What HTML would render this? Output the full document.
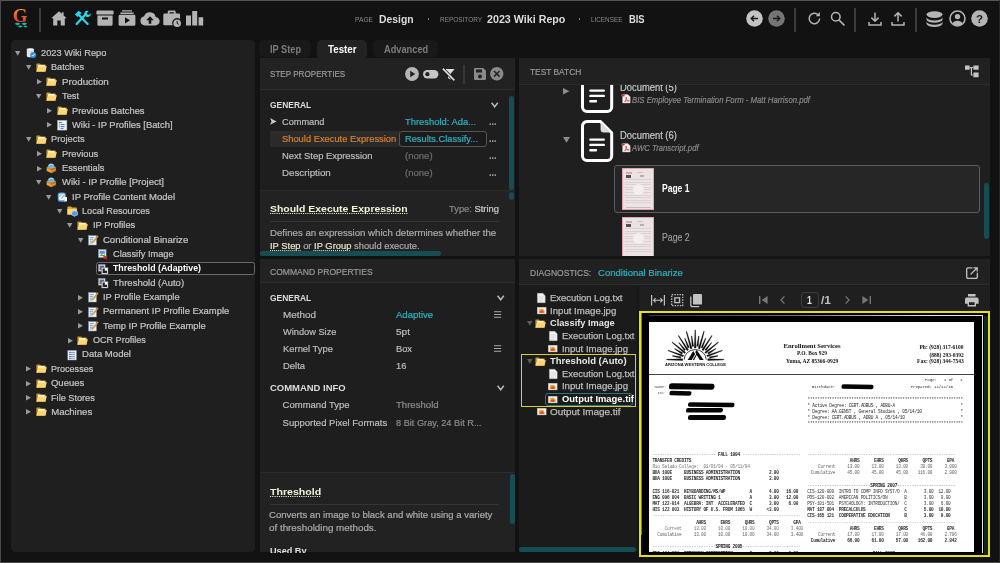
<!DOCTYPE html><html><head><meta charset="utf-8"><title>Design</title><style>
html,body{margin:0;padding:0}
body{width:1000px;height:563px;overflow:hidden;position:relative;background:#121212;font-family:"Liberation Sans",sans-serif;}
.a{position:absolute;box-sizing:border-box}
.t{position:absolute;white-space:pre;display:block}
svg{position:absolute;overflow:visible}
#app{position:absolute;left:0;top:0;width:1000px;height:563px;overflow:hidden;will-change:transform}

</style></head><body><div id="app">
<div class="a" style="left:0px;top:0px;width:1000px;height:563px;background:#121212;"></div>
<svg style="left:12px;top:6px;" width="22" height="26" viewBox="0 0 22 26"><defs><linearGradient id="gg" x1="0" y1="0" x2="0" y2="1"><stop offset="0" stop-color="#f9b21e"/><stop offset="0.55" stop-color="#ee5a24"/><stop offset="1" stop-color="#d9262c"/></linearGradient></defs>
<text x="0.8" y="15.8" font-family="Liberation Serif, serif" font-size="19" font-weight="700" fill="url(#gg)">G</text>
<path d="M2.4 17.8l3.1-1.4 3.1 1.4-3.1 1.4zM9.2 17.8l3.1-1.4 3.1 1.4-3.1 1.4zM5.6 20.4l2.7-1.2 2.7 1.2-2.7 1.2zM11.2 20.4l2.2-1 2.2 1-2.2 1z" fill="#1fb8ae"/></svg>
<div class="a" style="left:38.5px;top:8px;width:2px;height:24px;background:#3c3c3c;"></div>
<svg style="left:51px;top:10.5px;" width="16" height="15" viewBox="0 0 16 15"><path d="M8 0.3 L0.2 7.3 L2.2 7.3 L2.2 14.5 L6.3 14.5 L6.3 9.6 L9.7 9.6 L9.7 14.5 L13.8 14.5 L13.8 7.3 L15.8 7.3 L12.6 4.4 L12.6 1.2 L10.8 1.2 L10.8 2.8 Z" fill="#b4b4b4"/></svg>
<svg style="left:74px;top:10px;" width="16" height="16" viewBox="0 0 16 16"><g fill="none" stroke="#27d6ea" stroke-width="2.2" stroke-linecap="round"><path d="M4.2 4.2 L13.6 14"/><path d="M11.2 4.8 L2.6 14"/></g>
<path d="M0.8 4.6 L4.6 0.8 L7.6 3 L3.6 7 Z" fill="#27d6ea"/><path d="M10.2 3.4 a3.2 3.2 0 0 1 4.6 -2.4 l-2 2 l0.6 1.6 l1.6 0.4 l1.8 -1.8 a3.2 3.2 0 0 1 -4.4 3.6 Z" fill="#27d6ea"/></svg>
<svg style="left:96px;top:10px;" width="18" height="16" viewBox="0 0 18 16"><path d="M1.6 0.4 h14.8 a1.2 1.2 0 0 1 1.2 1.2 v2.2 a0.8 0.8 0 0 1 -0.8 0.8 h-15.6 a0.8 0.8 0 0 1 -0.8 -0.8 v-2.2 a1.2 1.2 0 0 1 1.2 -1.2z M1.4 5.6 h15.2 v8.6 a1.5 1.5 0 0 1 -1.5 1.5 h-12.2 a1.5 1.5 0 0 1 -1.5 -1.5z M6 7.6 v2 h6 v-2z" fill="#b4b4b4" fill-rule="evenodd"/></svg>
<svg style="left:118px;top:10px;" width="18" height="16" viewBox="0 0 18 16"><path d="M4 0.3 h10 v1.3 h-10z M2.4 2.5 h13.2 v1.4 h-13.2z M2 4.8 h14 a1.4 1.4 0 0 1 1.4 1.4 v8.2 a1.4 1.4 0 0 1 -1.4 1.4 h-14 a1.4 1.4 0 0 1 -1.4 -1.4 v-8.2 a1.4 1.4 0 0 1 1.4 -1.4z M7 7.2 v6.2 l5 -3.1z" fill="#b4b4b4" fill-rule="evenodd"/></svg>
<svg style="left:140px;top:11px;" width="20" height="15" viewBox="0 0 20 15"><path d="M5 14.4 a4.6 4.6 0 0 1 -0.9 -9.1 a6 6 0 0 1 11.6 0.7 a4.2 4.2 0 0 1 -0.5 8.4z" fill="#b4b4b4"/><path d="M10 5.2 l-3.8 4 h2.5 v3.6 h2.6 v-3.6 h2.5z" fill="#121212"/></svg>
<svg style="left:163px;top:9.5px;" width="19" height="18" viewBox="0 0 19 18"><path d="M6 0.6 h5.4 a1.3 1.3 0 0 1 1.3 1.3 v1.6 h3 a1.4 1.4 0 0 1 1.4 1.4 v4.2 a5 5 0 0 0 -7.4 6.2 h-8 a1.4 1.4 0 0 1 -1.4 -1.4 v-9 a1.4 1.4 0 0 1 1.4 -1.4 h3 v-1.6 a1.3 1.3 0 0 1 1.3 -1.3z M6.6 2.2 v1.3 h4.2 v-1.3z" fill="#b4b4b4" fill-rule="evenodd"/><circle cx="14.2" cy="13.2" r="3.8" fill="#b4b4b4"/><path d="M14.2 11 v2.4 l1.6 1" stroke="#121212" stroke-width="1" fill="none"/></svg>
<svg style="left:185.8px;top:10.8px;" width="18" height="15" viewBox="0 0 18 15"><path d="M0 4.5 h5 v10 h-5z M6.2 0 h5 v14.5 h-5z M12.6 6.2 h4.6 v8.3 h-4.6z" fill="#b4b4b4"/></svg>
<span class="t" style="top:14.00px;font-size:7.5px;line-height:11px;color:#8a8a8a;left:355.40px;transform:scaleX(0.8868);transform-origin:0 50%;">PAGE</span>
<span class="t" style="top:12.00px;font-size:11.5px;line-height:14px;color:#dcdcdc;left:379.40px;font-weight:700;transform:scaleX(0.9024);transform-origin:0 50%;">Design</span>
<div class="a" style="left:427.5px;top:18px;width:1.6px;height:1.6px;background:#999;border-radius:1px"></div>
<span class="t" style="top:14.00px;font-size:7.5px;line-height:11px;color:#8a8a8a;left:439.80px;transform:scaleX(0.8588);transform-origin:0 50%;">REPOSITORY</span>
<span class="t" style="top:12.00px;font-size:11.5px;line-height:14px;color:#dcdcdc;left:487.20px;font-weight:700;transform:scaleX(0.9304);transform-origin:0 50%;">2023 Wiki Repo</span>
<div class="a" style="left:578.8px;top:18px;width:1.6px;height:1.6px;background:#999;border-radius:1px"></div>
<span class="t" style="top:14.00px;font-size:7.5px;line-height:11px;color:#8a8a8a;left:591.20px;transform:scaleX(0.8461);transform-origin:0 50%;">LICENSEE</span>
<span class="t" style="top:12.00px;font-size:11.5px;line-height:14px;color:#dcdcdc;left:628.60px;font-weight:700;transform:scaleX(0.8137);transform-origin:0 50%;">BIS</span>
<svg style="left:746px;top:10px;" width="17" height="17" viewBox="0 0 17 17"><circle cx="8.5" cy="8.5" r="8.3" fill="#c4c4c4"/><path d="M12 8.5 H5.6 M8 5.8 L5.3 8.5 L8 11.2" stroke="#1a1a1a" stroke-width="1.5" fill="none"/></svg>
<svg style="left:768.2px;top:10px;" width="17" height="17" viewBox="0 0 17 17"><circle cx="8.5" cy="8.5" r="8.3" fill="#757575"/><path d="M5 8.5 H11.4 M9 5.8 L11.7 8.5 L9 11.2" stroke="#1a1a1a" stroke-width="1.5" fill="none"/></svg>
<div class="a" style="left:794.3px;top:8px;width:1.6px;height:24px;background:#3c3c3c;"></div>
<svg style="left:807px;top:11px;" width="15" height="15" viewBox="0 0 15 15"><path d="M12.6 7.6 a5.2 5.2 0 1 1 -1.6 -3.9" stroke="#b4b4b4" stroke-width="1.5" fill="none"/><path d="M12.9 1 v4.2 h-4.2z" fill="#b4b4b4"/></svg>
<svg style="left:830px;top:11px;" width="15" height="15" viewBox="0 0 15 15"><circle cx="5.8" cy="5.8" r="4.3" stroke="#b4b4b4" stroke-width="1.5" fill="none"/><path d="M9 9 L14 14" stroke="#b4b4b4" stroke-width="1.7" stroke-linecap="round"/></svg>
<div class="a" style="left:854.3px;top:8px;width:1.6px;height:24px;background:#3c3c3c;"></div>
<svg style="left:868px;top:11.5px;" width="14" height="14" viewBox="0 0 14 14"><path d="M7 0.5 v8.5 M3.4 5.6 L7 9.2 L10.6 5.6 M1 10 v3 h12 v-3" stroke="#b4b4b4" stroke-width="1.5" fill="none"/></svg>
<svg style="left:890.7px;top:11.5px;" width="14" height="14" viewBox="0 0 14 14"><path d="M7 9.5 v-8.5 M3.4 4.4 L7 0.8 L10.6 4.4 M1 10 v3 h12 v-3" stroke="#b4b4b4" stroke-width="1.5" fill="none"/></svg>
<div class="a" style="left:915px;top:8px;width:1.6px;height:24px;background:#3c3c3c;"></div>
<svg style="left:926px;top:10.5px;" width="17" height="16" viewBox="0 0 17 16"><ellipse cx="8.5" cy="3.6" rx="8" ry="3.4" fill="#b4b4b4"/><path d="M0.5 6.2 a8 3.4 0 0 0 16 0 v2.2 a8 3.4 0 0 1 -16 0z M0.5 10.4 a8 3.4 0 0 0 16 0 v2.2 a8 3.4 0 0 1 -16 0z" fill="#b4b4b4"/></svg>
<svg style="left:949px;top:10.2px;" width="17" height="17" viewBox="0 0 17 17"><circle cx="8.5" cy="8.5" r="7.5" stroke="#b4b4b4" stroke-width="1.6" fill="none"/><circle cx="8.5" cy="6.6" r="2.7" fill="#b4b4b4"/><path d="M3.4 13.4 a5.4 4 0 0 1 10.2 0 a7 7 0 0 1 -10.2 0z" fill="#b4b4b4"/></svg>
<svg style="left:971.3px;top:10.2px;" width="17" height="17" viewBox="0 0 17 17"><circle cx="8.5" cy="8.5" r="8.3" fill="#b4b4b4"/><text x="8.5" y="12.6" text-anchor="middle" font-size="11.5" font-weight="700" font-family="Liberation Sans, sans-serif" fill="#1a1a1a">?</text></svg>
<div class="a" style="left:10.5px;top:39.8px;width:244.8px;height:512.5px;background:#1f1f1f;border-radius:4.5px"></div>
<svg style="left:15.399999999999999px;top:51.1px;" width="5.4" height="4.8" viewBox="0 0 5.4 4.8"><path d="M0 0 h5.4 l-2.7 4.8z" fill="#9a9a9a"/></svg>
<svg style="left:25.499999999999996px;top:48.3px;" width="11" height="10.5" viewBox="0 0 11 10.5"><path d="M0.8 1.8 a3.6 1.5 0 0 1 7.2 0 v6 a3.6 1.5 0 0 1 -7.2 0z" fill="#e3e6ea"/><ellipse cx="4.4" cy="1.8" rx="3.6" ry="1.4" fill="#f7f8fa" stroke="#aab" stroke-width="0.4"/><circle cx="7.2" cy="7" r="3" fill="#2f8fe0"/><path d="M5.8 7 l1 1.1 l1.9 -2.2" stroke="#fff" stroke-width="0.9" fill="none"/></svg>
<span class="t" style="top:46.00px;font-size:9.6px;line-height:13px;color:#c4c4c4;left:40.80px;transform:scaleX(0.9655);transform-origin:0 50%;-webkit-text-stroke:0.22px #c4c4c4;">2023 Wiki Repo</span>
<svg style="left:25.75px;top:65.44999999999999px;" width="5.4" height="4.8" viewBox="0 0 5.4 4.8"><path d="M0 0 h5.4 l-2.7 4.8z" fill="#9a9a9a"/></svg>
<svg style="left:35.849999999999994px;top:63.04999999999999px;" width="11" height="9.2" viewBox="0 0 11 9.2"><path d="M0.4 1 a0.6 0.6 0 0 1 0.6 -0.6 h3 l1 1.1 h4.2 a0.6 0.6 0 0 1 0.6 0.6 v6.4 h-9.4z" fill="#c8962a"/><path d="M2.4 3.6 h8.4 l-1.5 5.2 h-8.6z" fill="#ffd56e"/><path d="M2 2 h6.6 v1.6 h-6.6z" fill="#fff6d6"/><path d="M0.7 8.8 l1.7 -5.2 h8.4" fill="none" stroke="#fff3c4" stroke-width="0.5"/></svg>
<span class="t" style="top:60.00px;font-size:9.6px;line-height:13px;color:#c4c4c4;left:51.15px;transform:scaleX(0.9518);transform-origin:0 50%;-webkit-text-stroke:0.22px #c4c4c4;">Batches</span>
<svg style="left:36.7px;top:79.4px;" width="5" height="5.4" viewBox="0 0 5 5.4"><path d="M0 0 v5.4 l5 -2.7z" fill="#9a9a9a"/></svg>
<svg style="left:46.2px;top:77.4px;" width="11" height="9.2" viewBox="0 0 11 9.2"><path d="M0.4 1 a0.6 0.6 0 0 1 0.6 -0.6 h3 l1 1.1 h4.2 a0.6 0.6 0 0 1 0.6 0.6 v6.4 h-9.4z" fill="#c8962a"/><path d="M2.4 3.6 h8.4 l-1.5 5.2 h-8.6z" fill="#ffd56e"/><path d="M2 2 h6.6 v1.6 h-6.6z" fill="#fff6d6"/><path d="M0.7 8.8 l1.7 -5.2 h8.4" fill="none" stroke="#fff3c4" stroke-width="0.5"/></svg>
<span class="t" style="top:75.00px;font-size:9.6px;line-height:13px;color:#c4c4c4;left:61.50px;transform:scaleX(1.0202);transform-origin:0 50%;-webkit-text-stroke:0.22px #c4c4c4;">Production</span>
<svg style="left:36.1px;top:94.14999999999999px;" width="5.4" height="4.8" viewBox="0 0 5.4 4.8"><path d="M0 0 h5.4 l-2.7 4.8z" fill="#9a9a9a"/></svg>
<svg style="left:46.2px;top:91.75px;" width="11" height="9.2" viewBox="0 0 11 9.2"><path d="M0.4 1 a0.6 0.6 0 0 1 0.6 -0.6 h3 l1 1.1 h4.2 a0.6 0.6 0 0 1 0.6 0.6 v6.4 h-9.4z" fill="#c8962a"/><path d="M2.4 3.6 h8.4 l-1.5 5.2 h-8.6z" fill="#ffd56e"/><path d="M2 2 h6.6 v1.6 h-6.6z" fill="#fff6d6"/><path d="M0.7 8.8 l1.7 -5.2 h8.4" fill="none" stroke="#fff3c4" stroke-width="0.5"/></svg>
<span class="t" style="top:89.00px;font-size:9.6px;line-height:13px;color:#c4c4c4;left:61.50px;transform:scaleX(0.9700);transform-origin:0 50%;-webkit-text-stroke:0.22px #c4c4c4;">Test</span>
<svg style="left:47.05px;top:108.10000000000001px;" width="5" height="5.4" viewBox="0 0 5 5.4"><path d="M0 0 v5.4 l5 -2.7z" fill="#9a9a9a"/></svg>
<svg style="left:56.55px;top:106.10000000000001px;" width="11" height="9.2" viewBox="0 0 11 9.2"><path d="M0.4 1 a0.6 0.6 0 0 1 0.6 -0.6 h3 l1 1.1 h4.2 a0.6 0.6 0 0 1 0.6 0.6 v6.4 h-9.4z" fill="#c8962a"/><path d="M2.4 3.6 h8.4 l-1.5 5.2 h-8.6z" fill="#ffd56e"/><path d="M2 2 h6.6 v1.6 h-6.6z" fill="#fff6d6"/><path d="M0.7 8.8 l1.7 -5.2 h8.4" fill="none" stroke="#fff3c4" stroke-width="0.5"/></svg>
<span class="t" style="top:104.00px;font-size:9.6px;line-height:13px;color:#c4c4c4;left:71.85px;transform:scaleX(0.9711);transform-origin:0 50%;-webkit-text-stroke:0.22px #c4c4c4;">Previous Batches</span>
<svg style="left:47.05px;top:122.45px;" width="5" height="5.4" viewBox="0 0 5 5.4"><path d="M0 0 v5.4 l5 -2.7z" fill="#9a9a9a"/></svg>
<svg style="left:56.55px;top:120.05px;" width="10.5" height="10.5" viewBox="0 0 10.5 10.5"><rect x="0.5" y="0.3" width="9.4" height="9.8" fill="#f2f4f7" stroke="#9aa3ad" stroke-width="0.5"/><path d="M2 2.4 h3 M3.6 4.6 h4 M3.6 6.6 h4 M3.6 8.4 h3" stroke="#3b7fc4" stroke-width="1"/><path d="M2.4 2.4 v6" stroke="#777" stroke-width="0.5"/></svg>
<span class="t" style="top:118.00px;font-size:9.6px;line-height:13px;color:#c4c4c4;left:71.85px;transform:scaleX(0.9784);transform-origin:0 50%;-webkit-text-stroke:0.22px #c4c4c4;">Wiki - IP Profiles [Batch]</span>
<svg style="left:25.75px;top:137.2px;" width="5.4" height="4.8" viewBox="0 0 5.4 4.8"><path d="M0 0 h5.4 l-2.7 4.8z" fill="#9a9a9a"/></svg>
<svg style="left:35.849999999999994px;top:134.8px;" width="11" height="9.2" viewBox="0 0 11 9.2"><path d="M0.4 1 a0.6 0.6 0 0 1 0.6 -0.6 h3 l1 1.1 h4.2 a0.6 0.6 0 0 1 0.6 0.6 v6.4 h-9.4z" fill="#c8962a"/><path d="M2.4 3.6 h8.4 l-1.5 5.2 h-8.6z" fill="#ffd56e"/><path d="M2 2 h6.6 v1.6 h-6.6z" fill="#fff6d6"/><path d="M0.7 8.8 l1.7 -5.2 h8.4" fill="none" stroke="#fff3c4" stroke-width="0.5"/></svg>
<span class="t" style="top:132.00px;font-size:9.6px;line-height:13px;color:#c4c4c4;left:51.15px;transform:scaleX(0.9700);transform-origin:0 50%;-webkit-text-stroke:0.22px #c4c4c4;">Projects</span>
<svg style="left:36.7px;top:151.14999999999998px;" width="5" height="5.4" viewBox="0 0 5 5.4"><path d="M0 0 v5.4 l5 -2.7z" fill="#9a9a9a"/></svg>
<svg style="left:46.2px;top:149.15px;" width="11" height="9.2" viewBox="0 0 11 9.2"><path d="M0.4 1 a0.6 0.6 0 0 1 0.6 -0.6 h3 l1 1.1 h4.2 a0.6 0.6 0 0 1 0.6 0.6 v6.4 h-9.4z" fill="#c8962a"/><path d="M2.4 3.6 h8.4 l-1.5 5.2 h-8.6z" fill="#ffd56e"/><path d="M2 2 h6.6 v1.6 h-6.6z" fill="#fff6d6"/><path d="M0.7 8.8 l1.7 -5.2 h8.4" fill="none" stroke="#fff3c4" stroke-width="0.5"/></svg>
<span class="t" style="top:147.00px;font-size:9.6px;line-height:13px;color:#c4c4c4;left:61.50px;transform:scaleX(0.9700);transform-origin:0 50%;-webkit-text-stroke:0.22px #c4c4c4;">Previous</span>
<svg style="left:36.7px;top:165.5px;" width="5" height="5.4" viewBox="0 0 5 5.4"><path d="M0 0 v5.4 l5 -2.7z" fill="#9a9a9a"/></svg>
<svg style="left:46.2px;top:163.10000000000002px;" width="10.5" height="10.5" viewBox="0 0 10.5 10.5"><path d="M0.6 4 l4.6 1.6 l4.6 -1.6 v4 l-4.6 2.2 l-4.6 -2.2z" fill="#d9902c"/><path d="M5.2 5.6 l4.6 -1.6 v4 l-4.6 2.2z" fill="#b87218"/><path d="M0.6 4 l4.6 -1.4 l4.6 1.4 l-4.6 1.6z" fill="#f6c870"/><path d="M2 3.8 a3.2 3.2 0 0 1 6.4 0 l-3.2 1.2z" fill="#5fb0ee"/><path d="M3 2.6 a2.4 2 0 0 1 4.4 0" stroke="#e6f3fc" stroke-width="0.7" fill="none"/><path d="M1 6.6 l4.2 1.8 l4.2 -1.8" stroke="#f3d9a0" stroke-width="0.5" fill="none"/></svg>
<span class="t" style="top:161.00px;font-size:9.6px;line-height:13px;color:#c4c4c4;left:61.50px;transform:scaleX(0.9700);transform-origin:0 50%;-webkit-text-stroke:0.22px #c4c4c4;">Essentials</span>
<svg style="left:36.1px;top:180.25px;" width="5.4" height="4.8" viewBox="0 0 5.4 4.8"><path d="M0 0 h5.4 l-2.7 4.8z" fill="#9a9a9a"/></svg>
<svg style="left:46.2px;top:177.45000000000002px;" width="10.5" height="10.5" viewBox="0 0 10.5 10.5"><path d="M0.6 4 l4.6 1.6 l4.6 -1.6 v4 l-4.6 2.2 l-4.6 -2.2z" fill="#d9902c"/><path d="M5.2 5.6 l4.6 -1.6 v4 l-4.6 2.2z" fill="#b87218"/><path d="M0.6 4 l4.6 -1.4 l4.6 1.4 l-4.6 1.6z" fill="#f6c870"/><path d="M2 3.8 a3.2 3.2 0 0 1 6.4 0 l-3.2 1.2z" fill="#5fb0ee"/><path d="M3 2.6 a2.4 2 0 0 1 4.4 0" stroke="#e6f3fc" stroke-width="0.7" fill="none"/><path d="M1 6.6 l4.2 1.8 l4.2 -1.8" stroke="#f3d9a0" stroke-width="0.5" fill="none"/></svg>
<span class="t" style="top:175.00px;font-size:9.6px;line-height:13px;color:#c4c4c4;left:61.50px;transform:scaleX(0.9869);transform-origin:0 50%;-webkit-text-stroke:0.22px #c4c4c4;">Wiki - IP Profile [Project]</span>
<svg style="left:46.449999999999996px;top:194.6px;" width="5.4" height="4.8" viewBox="0 0 5.4 4.8"><path d="M0 0 h5.4 l-2.7 4.8z" fill="#9a9a9a"/></svg>
<svg style="left:56.55px;top:191.8px;" width="10.5" height="10.5" viewBox="0 0 10.5 10.5"><rect x="0.8" y="0.6" width="8" height="9.2" rx="2" fill="#4aa0e6"/><rect x="1.8" y="1.8" width="6" height="6.4" rx="1.4" fill="#eef4fa"/><path d="M4.6 6.4 l2.6 -3.4" stroke="#e05030" stroke-width="0.9"/><path d="M2.6 4.6 a2.4 2.4 0 0 1 2 -2" stroke="#6ab04a" stroke-width="0.9" fill="none"/><path d="M7.4 5 h2.6 v3.4 a1.2 1.2 0 0 1 -1.2 1.2 h-1.4z" fill="#f4f6f8"/></svg>
<span class="t" style="top:190.00px;font-size:9.6px;line-height:13px;color:#c4c4c4;left:71.85px;transform:scaleX(0.9922);transform-origin:0 50%;-webkit-text-stroke:0.22px #c4c4c4;">IP Profile Content Model</span>
<svg style="left:56.79999999999999px;top:208.95px;" width="5.4" height="4.8" viewBox="0 0 5.4 4.8"><path d="M0 0 h5.4 l-2.7 4.8z" fill="#9a9a9a"/></svg>
<svg style="left:66.89999999999999px;top:206.15px;" width="11" height="10.5" viewBox="0 0 11 10.5"><path d="M0.4 1 a0.6 0.6 0 0 1 0.6 -0.6 h3 l1 1.1 h4.2 a0.6 0.6 0 0 1 0.6 0.6 v6.4 h-9.4z" fill="#d9a83a"/><path d="M0.4 3 h9.4 v5.6 h-9.4z" fill="#ffd56e"/><path d="M7.6 4.6 l3 1.3 v3 l-3 1.4 l-3 -1.4 v-3z" fill="#49a0e8" stroke="#e8f2fb" stroke-width="0.5"/></svg>
<span class="t" style="top:204.00px;font-size:9.6px;line-height:13px;color:#c4c4c4;left:82.20px;transform:scaleX(0.9501);transform-origin:0 50%;-webkit-text-stroke:0.22px #c4c4c4;">Local Resources</span>
<svg style="left:67.15px;top:223.29999999999998px;" width="5.4" height="4.8" viewBox="0 0 5.4 4.8"><path d="M0 0 h5.4 l-2.7 4.8z" fill="#9a9a9a"/></svg>
<svg style="left:77.25px;top:220.9px;" width="11" height="9.2" viewBox="0 0 11 9.2"><path d="M0.4 1 a0.6 0.6 0 0 1 0.6 -0.6 h3 l1 1.1 h4.2 a0.6 0.6 0 0 1 0.6 0.6 v6.4 h-9.4z" fill="#c8962a"/><path d="M2.4 3.6 h8.4 l-1.5 5.2 h-8.6z" fill="#ffd56e"/><path d="M2 2 h6.6 v1.6 h-6.6z" fill="#fff6d6"/><path d="M0.7 8.8 l1.7 -5.2 h8.4" fill="none" stroke="#fff3c4" stroke-width="0.5"/></svg>
<span class="t" style="top:218.00px;font-size:9.6px;line-height:13px;color:#c4c4c4;left:92.55px;transform:scaleX(0.9700);transform-origin:0 50%;-webkit-text-stroke:0.22px #c4c4c4;">IP Profiles</span>
<svg style="left:77.5px;top:237.64999999999998px;" width="5.4" height="4.8" viewBox="0 0 5.4 4.8"><path d="M0 0 h5.4 l-2.7 4.8z" fill="#9a9a9a"/></svg>
<svg style="left:87.6px;top:234.85px;" width="10.5" height="10.5" viewBox="0 0 10.5 10.5"><rect x="0.6" y="0.6" width="7.8" height="9.4" fill="#eef1f5" stroke="#8b97a5" stroke-width="0.5"/><path d="M1.8 2.6 h4 M1.8 4.4 h3 M1.8 6.2 h2.4 M1.8 8 h2" stroke="#4b8fd0" stroke-width="0.8"/><path d="M9.6 0.6 l0.9 0.9 l-5 6 l-1.6 0.7 l0.6 -1.7z" fill="#f0a030" stroke="#a05a10" stroke-width="0.3"/></svg>
<span class="t" style="top:233.00px;font-size:9.6px;line-height:13px;color:#c4c4c4;left:102.90px;-webkit-text-stroke:0.22px #c4c4c4;">Conditional Binarize</span>
<svg style="left:97.95px;top:249.20000000000002px;" width="10.5" height="10.5" viewBox="0 0 10.5 10.5"><rect x="0.5" y="0.5" width="7.6" height="8" fill="#e6ebf2" stroke="#8b97a5" stroke-width="0.5"/><rect x="1.6" y="1.8" width="5.2" height="3" fill="#5a95d6"/><path d="M1.6 7 l2 -2.2 l1.6 1.4 l1.6 -1 v1.8z" fill="#6aa84a"/><path d="M5 6 l4.8 2 l-2 0.6 l1.6 1.6 l-0.8 0.5 l-1.6 -1.7 l-1 1.5z" fill="#e0362a"/></svg>
<span class="t" style="top:247.00px;font-size:9.6px;line-height:13px;color:#c4c4c4;left:113.25px;transform:scaleX(0.9631);transform-origin:0 50%;-webkit-text-stroke:0.22px #c4c4c4;">Classify Image</span>
<div class="a" style="left:95.6px;top:261.75px;width:159.4px;height:12.8px;background:#191919;border:1px solid #6a6a6a;border-radius:2.5px"></div>
<svg style="left:97.95px;top:263.55px;" width="10.5" height="10.5" viewBox="0 0 10.5 10.5"><rect x="0.5" y="0.5" width="6.6" height="6.6" fill="#dfe5ec" stroke="#8b97a5" stroke-width="0.5"/><rect x="1.6" y="1.6" width="4.4" height="4.4" fill="#5e6e7e"/><rect x="3.6" y="3.6" width="6.4" height="6.4" fill="#f4f6f8" stroke="#6b7785" stroke-width="0.5"/><path d="M4.6 4.6 h2.2 v2.2 h2.2 v2.2 h-4.4z" fill="#222"/></svg>
<span class="t" style="top:261.00px;font-size:9.6px;line-height:13px;color:#ffffff;left:113.25px;font-weight:700;transform:scaleX(0.9171);transform-origin:0 50%;">Threshold (Adaptive)</span>
<svg style="left:97.95px;top:277.90000000000003px;" width="10.5" height="10.5" viewBox="0 0 10.5 10.5"><rect x="0.5" y="0.5" width="6.6" height="6.6" fill="#dfe5ec" stroke="#8b97a5" stroke-width="0.5"/><rect x="1.6" y="1.6" width="4.4" height="4.4" fill="#5e6e7e"/><rect x="3.6" y="3.6" width="6.4" height="6.4" fill="#f4f6f8" stroke="#6b7785" stroke-width="0.5"/><path d="M4.6 4.6 h2.2 v2.2 h2.2 v2.2 h-4.4z" fill="#222"/></svg>
<span class="t" style="top:276.00px;font-size:9.6px;line-height:13px;color:#c4c4c4;left:113.25px;transform:scaleX(0.9951);transform-origin:0 50%;-webkit-text-stroke:0.22px #c4c4c4;">Threshold (Auto)</span>
<svg style="left:78.1px;top:294.65px;" width="5" height="5.4" viewBox="0 0 5 5.4"><path d="M0 0 v5.4 l5 -2.7z" fill="#9a9a9a"/></svg>
<svg style="left:87.6px;top:292.25px;" width="10.5" height="10.5" viewBox="0 0 10.5 10.5"><rect x="0.6" y="0.6" width="7.8" height="9.4" fill="#eef1f5" stroke="#8b97a5" stroke-width="0.5"/><path d="M1.8 2.6 h4 M1.8 4.4 h3 M1.8 6.2 h2.4 M1.8 8 h2" stroke="#4b8fd0" stroke-width="0.8"/><path d="M9.6 0.6 l0.9 0.9 l-5 6 l-1.6 0.7 l0.6 -1.7z" fill="#f0a030" stroke="#a05a10" stroke-width="0.3"/></svg>
<span class="t" style="top:290.00px;font-size:9.6px;line-height:13px;color:#c4c4c4;left:102.90px;transform:scaleX(0.9727);transform-origin:0 50%;-webkit-text-stroke:0.22px #c4c4c4;">IP Profile Example</span>
<svg style="left:78.1px;top:309.0px;" width="5" height="5.4" viewBox="0 0 5 5.4"><path d="M0 0 v5.4 l5 -2.7z" fill="#9a9a9a"/></svg>
<svg style="left:87.6px;top:306.6px;" width="10.5" height="10.5" viewBox="0 0 10.5 10.5"><rect x="0.6" y="0.6" width="7.8" height="9.4" fill="#eef1f5" stroke="#8b97a5" stroke-width="0.5"/><path d="M1.8 2.6 h4 M1.8 4.4 h3 M1.8 6.2 h2.4 M1.8 8 h2" stroke="#4b8fd0" stroke-width="0.8"/><path d="M9.6 0.6 l0.9 0.9 l-5 6 l-1.6 0.7 l0.6 -1.7z" fill="#f0a030" stroke="#a05a10" stroke-width="0.3"/></svg>
<span class="t" style="top:304.00px;font-size:9.6px;line-height:13px;color:#c4c4c4;left:102.90px;transform:scaleX(0.9841);transform-origin:0 50%;-webkit-text-stroke:0.22px #c4c4c4;">Permanent IP Profile Example</span>
<svg style="left:78.1px;top:323.34999999999997px;" width="5" height="5.4" viewBox="0 0 5 5.4"><path d="M0 0 v5.4 l5 -2.7z" fill="#9a9a9a"/></svg>
<svg style="left:87.6px;top:320.95px;" width="10.5" height="10.5" viewBox="0 0 10.5 10.5"><rect x="0.6" y="0.6" width="7.8" height="9.4" fill="#eef1f5" stroke="#8b97a5" stroke-width="0.5"/><path d="M1.8 2.6 h4 M1.8 4.4 h3 M1.8 6.2 h2.4 M1.8 8 h2" stroke="#4b8fd0" stroke-width="0.8"/><path d="M9.6 0.6 l0.9 0.9 l-5 6 l-1.6 0.7 l0.6 -1.7z" fill="#f0a030" stroke="#a05a10" stroke-width="0.3"/></svg>
<span class="t" style="top:319.00px;font-size:9.6px;line-height:13px;color:#c4c4c4;left:102.90px;transform:scaleX(0.9802);transform-origin:0 50%;-webkit-text-stroke:0.22px #c4c4c4;">Temp IP Profile Example</span>
<svg style="left:67.75px;top:337.7px;" width="5" height="5.4" viewBox="0 0 5 5.4"><path d="M0 0 v5.4 l5 -2.7z" fill="#9a9a9a"/></svg>
<svg style="left:77.25px;top:335.7px;" width="11" height="9.2" viewBox="0 0 11 9.2"><path d="M0.4 1 a0.6 0.6 0 0 1 0.6 -0.6 h3 l1 1.1 h4.2 a0.6 0.6 0 0 1 0.6 0.6 v6.4 h-9.4z" fill="#c8962a"/><path d="M2.4 3.6 h8.4 l-1.5 5.2 h-8.6z" fill="#ffd56e"/><path d="M2 2 h6.6 v1.6 h-6.6z" fill="#fff6d6"/><path d="M0.7 8.8 l1.7 -5.2 h8.4" fill="none" stroke="#fff3c4" stroke-width="0.5"/></svg>
<span class="t" style="top:333.00px;font-size:9.6px;line-height:13px;color:#c4c4c4;left:92.55px;transform:scaleX(0.9431);transform-origin:0 50%;-webkit-text-stroke:0.22px #c4c4c4;">OCR Profiles</span>
<svg style="left:66.89999999999999px;top:349.65px;" width="10.5" height="10.5" viewBox="0 0 10.5 10.5"><rect x="0.8" y="0.4" width="8.6" height="9.6" fill="#eef1f5" stroke="#8b97a5" stroke-width="0.5"/><path d="M2.2 2.4 h5.8 M2.2 4.4 h5.8 M2.2 6.4 h5.8 M2.2 8.2 h5.8" stroke="#7d8fa6" stroke-width="0.9"/><path d="M2.2 2.4 h1.6 M2.2 4.4 h1.6 M2.2 6.4 h1.6 M2.2 8.2 h1.6" stroke="#3b7fc4" stroke-width="0.9"/></svg>
<span class="t" style="top:347.00px;font-size:9.6px;line-height:13px;color:#c4c4c4;left:82.20px;transform:scaleX(0.9967);transform-origin:0 50%;-webkit-text-stroke:0.22px #c4c4c4;">Data Model</span>
<svg style="left:26.349999999999998px;top:366.4px;" width="5" height="5.4" viewBox="0 0 5 5.4"><path d="M0 0 v5.4 l5 -2.7z" fill="#9a9a9a"/></svg>
<svg style="left:35.849999999999994px;top:364.4px;" width="11" height="9.2" viewBox="0 0 11 9.2"><path d="M0.4 1 a0.6 0.6 0 0 1 0.6 -0.6 h3 l1 1.1 h4.2 a0.6 0.6 0 0 1 0.6 0.6 v6.4 h-9.4z" fill="#c8962a"/><path d="M2.4 3.6 h8.4 l-1.5 5.2 h-8.6z" fill="#ffd56e"/><path d="M2 2 h6.6 v1.6 h-6.6z" fill="#fff6d6"/><path d="M0.7 8.8 l1.7 -5.2 h8.4" fill="none" stroke="#fff3c4" stroke-width="0.5"/></svg>
<span class="t" style="top:362.00px;font-size:9.6px;line-height:13px;color:#c4c4c4;left:51.15px;transform:scaleX(0.9420);transform-origin:0 50%;-webkit-text-stroke:0.22px #c4c4c4;">Processes</span>
<svg style="left:26.349999999999998px;top:380.75px;" width="5" height="5.4" viewBox="0 0 5 5.4"><path d="M0 0 v5.4 l5 -2.7z" fill="#9a9a9a"/></svg>
<svg style="left:35.849999999999994px;top:378.75px;" width="11" height="9.2" viewBox="0 0 11 9.2"><path d="M0.4 1 a0.6 0.6 0 0 1 0.6 -0.6 h3 l1 1.1 h4.2 a0.6 0.6 0 0 1 0.6 0.6 v6.4 h-9.4z" fill="#c8962a"/><path d="M2.4 3.6 h8.4 l-1.5 5.2 h-8.6z" fill="#ffd56e"/><path d="M2 2 h6.6 v1.6 h-6.6z" fill="#fff6d6"/><path d="M0.7 8.8 l1.7 -5.2 h8.4" fill="none" stroke="#fff3c4" stroke-width="0.5"/></svg>
<span class="t" style="top:376.00px;font-size:9.6px;line-height:13px;color:#c4c4c4;left:51.15px;transform:scaleX(0.9878);transform-origin:0 50%;-webkit-text-stroke:0.22px #c4c4c4;">Queues</span>
<svg style="left:26.349999999999998px;top:395.09999999999997px;" width="5" height="5.4" viewBox="0 0 5 5.4"><path d="M0 0 v5.4 l5 -2.7z" fill="#9a9a9a"/></svg>
<svg style="left:35.849999999999994px;top:393.09999999999997px;" width="11" height="9.2" viewBox="0 0 11 9.2"><path d="M0.4 1 a0.6 0.6 0 0 1 0.6 -0.6 h3 l1 1.1 h4.2 a0.6 0.6 0 0 1 0.6 0.6 v6.4 h-9.4z" fill="#c8962a"/><path d="M2.4 3.6 h8.4 l-1.5 5.2 h-8.6z" fill="#ffd56e"/><path d="M2 2 h6.6 v1.6 h-6.6z" fill="#fff6d6"/><path d="M0.7 8.8 l1.7 -5.2 h8.4" fill="none" stroke="#fff3c4" stroke-width="0.5"/></svg>
<span class="t" style="top:391.00px;font-size:9.6px;line-height:13px;color:#c4c4c4;left:51.15px;transform:scaleX(0.9551);transform-origin:0 50%;-webkit-text-stroke:0.22px #c4c4c4;">File Stores</span>
<svg style="left:26.349999999999998px;top:409.45px;" width="5" height="5.4" viewBox="0 0 5 5.4"><path d="M0 0 v5.4 l5 -2.7z" fill="#9a9a9a"/></svg>
<svg style="left:35.849999999999994px;top:407.45px;" width="11" height="9.2" viewBox="0 0 11 9.2"><path d="M0.4 1 a0.6 0.6 0 0 1 0.6 -0.6 h3 l1 1.1 h4.2 a0.6 0.6 0 0 1 0.6 0.6 v6.4 h-9.4z" fill="#c8962a"/><path d="M2.4 3.6 h8.4 l-1.5 5.2 h-8.6z" fill="#ffd56e"/><path d="M2 2 h6.6 v1.6 h-6.6z" fill="#fff6d6"/><path d="M0.7 8.8 l1.7 -5.2 h8.4" fill="none" stroke="#fff3c4" stroke-width="0.5"/></svg>
<span class="t" style="top:405.00px;font-size:9.6px;line-height:13px;color:#c4c4c4;left:51.15px;-webkit-text-stroke:0.22px #c4c4c4;">Machines</span>
<div class="a" style="left:259.4px;top:39.6px;width:51.8px;height:17.8px;background:#191919;border-radius:5px"></div>
<div class="a" style="left:317.2px;top:39.6px;width:50px;height:18.2px;background:#222222;border-radius:5px 5px 3px 3px"></div>
<div class="a" style="left:373.2px;top:39.6px;width:65px;height:17.8px;background:#191919;border-radius:5px"></div>
<span class="t" style="top:43.00px;font-size:10.3px;line-height:13px;color:#7c7c7c;left:270.20px;font-weight:700;transform:scaleX(0.8929);transform-origin:0 50%;">IP Step</span>
<span class="t" style="top:43.00px;font-size:10.3px;line-height:13px;color:#ffffff;left:328.40px;font-weight:700;transform:scaleX(0.9484);transform-origin:0 50%;">Tester</span>
<span class="t" style="top:43.00px;font-size:10.3px;line-height:13px;color:#7c7c7c;left:383.90px;font-weight:700;transform:scaleX(0.8980);transform-origin:0 50%;">Advanced</span>
<div class="a" style="left:259.6px;top:58px;width:255.2px;height:198px;background:#1e1e1e;"></div>
<div class="a" style="left:259.6px;top:58px;width:255.2px;height:32px;background:#222222;border-bottom:1px solid #2d2d2d"></div>
<span class="t" style="top:67.00px;font-size:9.5px;line-height:13px;color:#9a9a9a;left:269.60px;transform:scaleX(0.8512);transform-origin:0 50%;-webkit-text-stroke:0.2px;">STEP PROPERTIES</span>
<svg style="left:404.6px;top:67px;" width="14" height="14" viewBox="0 0 14 14"><circle cx="7" cy="7" r="6.9" fill="#b6b6b6"/><path d="M5.2 3.8 v6.4 l5 -3.2z" fill="#222"/></svg>
<svg style="left:422.6px;top:70px;" width="15.4" height="8.4" viewBox="0 0 15.4 8.4"><rect x="0" y="0" width="15.4" height="8.4" rx="4.2" fill="#c6c6c6"/><circle cx="4.4" cy="4.2" r="2.1" fill="#222"/></svg>
<svg style="left:441.6px;top:67.6px;" width="13" height="13" viewBox="0 0 13 13"><path d="M2 1 h10.6 l-4 4.8 v6 l-2.6 -1.8 v-2.4" fill="#dcdcdc"/><path d="M0.8 0.6 L12.4 12.4" stroke="#222" stroke-width="3"/><path d="M0.8 0.6 L12.4 12.4" stroke="#e0e0e0" stroke-width="1.5"/></svg>
<div class="a" style="left:463px;top:65.2px;width:1.8px;height:19px;background:#363636;"></div>
<svg style="left:474px;top:68px;" width="12" height="12" viewBox="0 0 12 12"><path d="M1.2 0 h8 l2.8 2.8 v8 a1.2 1.2 0 0 1 -1.2 1.2 h-9.6 a1.2 1.2 0 0 1 -1.2 -1.2 v-9.6 a1.2 1.2 0 0 1 1.2 -1.2z M2 1.6 v3 h6 v-3z M6 6.4 a2 2 0 1 0 0.01 0z" fill="#8a8a8a" fill-rule="evenodd"/></svg>
<svg style="left:489.6px;top:67.2px;" width="13.6" height="13.6" viewBox="0 0 13.6 13.6"><circle cx="6.8" cy="6.8" r="6.7" fill="#8a8a8a"/><path d="M4 4 L9.6 9.6 M9.6 4 L4 9.6" stroke="#222" stroke-width="1.5"/></svg>
<span class="t" style="top:98.00px;font-size:9.5px;line-height:13px;color:#dedede;left:269.80px;font-weight:700;transform:scaleX(0.8869);transform-origin:0 50%;">GENERAL</span>
<svg style="left:491px;top:102px;" width="7.4" height="6" viewBox="0 0 7.4 6"><path d="M0.6 0.8 L3.7 4.8 L6.8 0.8" stroke="#bdbdbd" stroke-width="1.4" fill="none"/></svg>
<svg style="left:269.8px;top:118px;" width="6.6" height="6.8" viewBox="0 0 6.6 6.8"><path d="M0 0 L6.6 3.4 L0 6.8 L1.6 3.4z" fill="#c8c8c8"/></svg>
<span class="t" style="top:115.00px;font-size:9.5px;line-height:13px;color:#bdbdbd;left:282.00px;transform:scaleX(0.9674);transform-origin:0 50%;-webkit-text-stroke:0.2px;">Command</span>
<span class="t" style="top:115.00px;font-size:9.5px;line-height:13px;color:#2ab3c4;left:405.40px;transform:scaleX(0.9885);transform-origin:0 50%;-webkit-text-stroke:0.2px;">Threshold: Ada...</span>
<div class="a" style="left:269.6px;top:131px;width:130px;height:15.6px;background:#2a2a2a;"></div>
<span class="t" style="top:132.00px;font-size:9.5px;line-height:13px;color:#d9822b;left:282.00px;transform:scaleX(0.9829);transform-origin:0 50%;-webkit-text-stroke:0.2px;">Should Execute Expression</span>
<div class="a" style="left:399.4px;top:130.8px;width:87.4px;height:16px;background:#1b1b1b;border:1px solid #565656;border-radius:3px"></div>
<span class="t" style="top:132.00px;font-size:9.5px;line-height:13px;color:#2ab3c4;left:405.40px;transform:scaleX(0.9760);transform-origin:0 50%;-webkit-text-stroke:0.2px;">Results.Classify...</span>
<span class="t" style="top:149.00px;font-size:9.5px;line-height:13px;color:#bdbdbd;left:282.00px;transform:scaleX(0.9917);transform-origin:0 50%;-webkit-text-stroke:0.2px;">Next Step Expression</span>
<span class="t" style="top:149.00px;font-size:9.5px;line-height:13px;color:#6e6e6e;left:405.40px;transform:scaleX(1.0048);transform-origin:0 50%;-webkit-text-stroke:0.2px;">(none)</span>
<span class="t" style="top:166.00px;font-size:9.5px;line-height:13px;color:#bdbdbd;left:282.00px;transform:scaleX(1.0267);transform-origin:0 50%;-webkit-text-stroke:0.2px;">Description</span>
<span class="t" style="top:166.00px;font-size:9.5px;line-height:13px;color:#6e6e6e;left:405.40px;transform:scaleX(1.0048);transform-origin:0 50%;-webkit-text-stroke:0.2px;">(none)</span>
<span class="t" style="top:115.00px;font-size:10px;line-height:13px;color:#a4a4a4;left:489.00px;font-weight:700;transform:scaleX(0.8869);transform-origin:0 50%;">...</span>
<span class="t" style="top:132.00px;font-size:10px;line-height:13px;color:#a4a4a4;left:489.00px;font-weight:700;transform:scaleX(0.8869);transform-origin:0 50%;">...</span>
<span class="t" style="top:149.00px;font-size:10px;line-height:13px;color:#a4a4a4;left:489.00px;font-weight:700;transform:scaleX(0.8869);transform-origin:0 50%;">...</span>
<span class="t" style="top:166.00px;font-size:10px;line-height:13px;color:#a4a4a4;left:489.00px;font-weight:700;transform:scaleX(0.8869);transform-origin:0 50%;">...</span>
<div class="a" style="left:509.4px;top:95.6px;width:5px;height:94px;background:#154d52;border-radius:2.5px"></div>
<div class="a" style="left:259.6px;top:190.4px;width:255.2px;height:65.6px;background:#222222;border-top:1px solid #2b2b2b"></div>
<div class="a" style="left:509.4px;top:191.6px;width:5px;height:8.4px;background:#154d52;border-radius:2.5px"></div>
<span class="t" style="top:202.00px;font-size:9.5px;line-height:13px;color:#f3f3d8;left:269.80px;font-weight:700;transform:scaleX(1.0997);transform-origin:0 50%;text-decoration:underline dotted #f3f3d8 1px;text-underline-offset:0.6px;">Should Execute Expression</span>
<span class="t" style="top:202.00px;font-size:9.5px;line-height:13px;color:#8a8a8a;left:449.20px;transform:scaleX(0.9858);transform-origin:0 50%;-webkit-text-stroke:0.2px;"><span style="color:#8a8a8a">Type:</span> <span style="color:#cfcfcf">String</span></span>
<div class="a" style="left:269.8px;top:221.2px;width:229.4px;height:1px;background:#343434;"></div>
<span class="t" style="top:226.00px;font-size:9.5px;line-height:13px;color:#ababab;left:269.80px;transform:scaleX(1.0151);transform-origin:0 50%;-webkit-text-stroke:0.2px;">Defines an expression which determines whether the</span>
<span class="t" style="top:239.00px;font-size:9.5px;line-height:13px;color:#ababab;left:269.80px;transform:scaleX(0.9856);transform-origin:0 50%;-webkit-text-stroke:0.2px;"><span style="text-decoration:underline dotted 1px;text-underline-offset:0.5px;color:#e6e5c8">IP Step</span> or <span style="text-decoration:underline dotted 1px;text-underline-offset:0.5px;color:#e6e5c8">IP Group</span> should execute.</span>
<div class="a" style="left:260px;top:251.2px;width:181px;height:4.6px;background:#154d52;border-radius:2.3px"></div>
<div class="a" style="left:259.6px;top:258.8px;width:255.2px;height:293.7px;background:#1e1e1e;"></div>
<div class="a" style="left:259.6px;top:258.8px;width:255.2px;height:23.8px;background:#222222;border-bottom:1px solid #2d2d2d"></div>
<span class="t" style="top:265.00px;font-size:9.5px;line-height:13px;color:#9a9a9a;left:269.80px;transform:scaleX(0.9012);transform-origin:0 50%;-webkit-text-stroke:0.2px;">COMMAND PROPERTIES</span>
<span class="t" style="top:291.00px;font-size:9.5px;line-height:13px;color:#dedede;left:269.80px;font-weight:700;transform:scaleX(0.8869);transform-origin:0 50%;">GENERAL</span>
<svg style="left:496.8px;top:294.8px;" width="7.4" height="6" viewBox="0 0 7.4 6"><path d="M0.6 0.8 L3.7 4.8 L6.8 0.8" stroke="#bdbdbd" stroke-width="1.4" fill="none"/></svg>
<span class="t" style="top:308.00px;font-size:9.5px;line-height:13px;color:#bdbdbd;left:282.60px;transform:scaleX(1.0414);transform-origin:0 50%;-webkit-text-stroke:0.2px;">Method</span>
<span class="t" style="top:308.00px;font-size:9.5px;line-height:13px;color:#2ab3c4;left:396.20px;transform:scaleX(1.0058);transform-origin:0 50%;-webkit-text-stroke:0.2px;">Adaptive</span>
<svg style="left:494.4px;top:311.20000000000005px;" width="7.2" height="7" viewBox="0 0 7.2 7"><path d="M0 0.7 h7.2 M0 3.5 h7.2 M0 6.3 h7.2" stroke="#a8a8a8" stroke-width="1"/></svg>
<span class="t" style="top:325.00px;font-size:9.5px;line-height:13px;color:#bdbdbd;left:282.60px;transform:scaleX(0.9723);transform-origin:0 50%;-webkit-text-stroke:0.2px;">Window Size</span>
<span class="t" style="top:325.00px;font-size:9.5px;line-height:13px;color:#bdbdbd;left:396.20px;transform:scaleX(1.0591);transform-origin:0 50%;-webkit-text-stroke:0.2px;">5pt</span>
<span class="t" style="top:342.00px;font-size:9.5px;line-height:13px;color:#bdbdbd;left:282.60px;transform:scaleX(0.9895);transform-origin:0 50%;-webkit-text-stroke:0.2px;">Kernel Type</span>
<span class="t" style="top:342.00px;font-size:9.5px;line-height:13px;color:#bdbdbd;left:396.20px;transform:scaleX(0.9771);transform-origin:0 50%;-webkit-text-stroke:0.2px;">Box</span>
<svg style="left:494.4px;top:345.40000000000003px;" width="7.2" height="7" viewBox="0 0 7.2 7"><path d="M0 0.7 h7.2 M0 3.5 h7.2 M0 6.3 h7.2" stroke="#a8a8a8" stroke-width="1"/></svg>
<span class="t" style="top:359.00px;font-size:9.5px;line-height:13px;color:#bdbdbd;left:282.60px;transform:scaleX(0.9915);transform-origin:0 50%;-webkit-text-stroke:0.2px;">Delta</span>
<span class="t" style="top:359.00px;font-size:9.5px;line-height:13px;color:#bdbdbd;left:396.20px;transform:scaleX(0.9832);transform-origin:0 50%;-webkit-text-stroke:0.2px;">16</span>
<span class="t" style="top:381.00px;font-size:9.5px;line-height:13px;color:#dedede;left:269.80px;font-weight:700;transform:scaleX(0.9947);transform-origin:0 50%;">COMMAND INFO</span>
<svg style="left:496.8px;top:385.3px;" width="7.4" height="6" viewBox="0 0 7.4 6"><path d="M0.6 0.8 L3.7 4.8 L6.8 0.8" stroke="#bdbdbd" stroke-width="1.4" fill="none"/></svg>
<span class="t" style="top:398.00px;font-size:9.5px;line-height:13px;color:#bdbdbd;left:282.60px;-webkit-text-stroke:0.2px;">Command Type</span>
<span class="t" style="top:398.00px;font-size:9.5px;line-height:13px;color:#8c8c8c;left:396.20px;transform:scaleX(1.0083);transform-origin:0 50%;-webkit-text-stroke:0.2px;">Threshold</span>
<span class="t" style="top:416.00px;font-size:9.5px;line-height:13px;color:#bdbdbd;left:282.60px;-webkit-text-stroke:0.2px;">Supported Pixel Formats</span>
<span class="t" style="top:416.00px;font-size:9.5px;line-height:13px;color:#8c8c8c;left:396.20px;transform:scaleX(0.9669);transform-origin:0 50%;-webkit-text-stroke:0.2px;">8 Bit Gray, 24 Bit R...</span>
<div class="a" style="left:259.6px;top:472.4px;width:255.2px;height:80.1px;background:#222222;border-top:1px solid #2b2b2b;overflow:hidden"></div>
<div class="a" style="left:509.6px;top:474px;width:5px;height:50px;background:#154d52;border-radius:2.5px"></div>
<span class="t" style="top:485.00px;font-size:9.5px;line-height:13px;color:#f3f3d8;left:269.90px;font-weight:700;transform:scaleX(1.1149);transform-origin:0 50%;text-decoration:underline dotted #f3f3d8 1px;text-underline-offset:0.6px;">Threshold</span>
<div class="a" style="left:269.8px;top:504px;width:229px;height:1px;background:#343434;"></div>
<span class="t" style="top:508.00px;font-size:9.5px;line-height:13px;color:#ababab;left:269.40px;transform:scaleX(1.0048);transform-origin:0 50%;-webkit-text-stroke:0.2px;">Converts an image to black and white using a variety</span>
<span class="t" style="top:521.00px;font-size:9.5px;line-height:13px;color:#ababab;left:269.40px;transform:scaleX(1.0332);transform-origin:0 50%;-webkit-text-stroke:0.2px;">of thresholding methods.</span>
<div class="a" style="left:259.6px;top:540px;width:255px;height:12.5px;overflow:hidden">
<span class="t" style="top:4.00px;font-size:9.5px;line-height:13px;color:#dedede;left:10.00px;font-weight:700;transform:scaleX(0.9601);transform-origin:0 50%;">Used By</span>
</div>
<div class="a" style="left:519px;top:58px;width:470.6px;height:198px;background:#1f1f1f;overflow:hidden"></div>
<svg style="left:580.9px;top:70.6px;" width="32.2" height="42" viewBox="0 0 32.2 42"><path d="M6 1.5 h13.4 l11.3 11.3 v23.2 a4.5 4.5 0 0 1 -4.5 4.5 h-20.2 a4.5 4.5 0 0 1 -4.5 -4.5 v-30 a4.5 4.5 0 0 1 4.5 -4.5z" fill="none" stroke="#ffffff" stroke-width="3"/><path d="M19.6 2.2 l10.4 10.4 h-7.4 a3 3 0 0 1 -3 -3z" fill="#dcdcdc"/><path d="M9.4 19.6 h13.4 M9.4 24.9 h13.4 M9.4 30.2 h5.6" stroke="#ffffff" stroke-width="2.4" stroke-linecap="round"/></svg>
<svg style="left:562.8px;top:88px;" width="6.4" height="6.4" viewBox="0 0 6.4 6.4"><path d="M0 0 v6.4 l6.4 -3.2z" fill="#8c8c8c"/></svg>
<span class="t" style="top:81.00px;font-size:10px;line-height:13px;color:#c8c8c8;left:620.40px;transform:scaleX(0.9376);transform-origin:0 50%;-webkit-text-stroke:0.2px;">Document (5)</span>
<svg style="left:620.6px;top:94.4px;" width="9.6" height="9.4" viewBox="0 0 9.6 9.4"><path d="M1.6 0.4 h5.2 l2.4 2.4 v6.2 h-7.6z" fill="#f4f4f4" stroke="#bbb" stroke-width="0.4"/><rect x="0" y="0.6" width="3.6" height="1.8" fill="#e8241c"/><path d="M3.6 7.6 c1.6 -1.6 2.2 -3.4 1.8 -4.4 c-0.6 -0.8 -1 1 0 2.4 c0.8 1.2 2.2 1.8 2.8 1.4 c0.4 -0.6 -2.4 -0.6 -4.6 0.6z" fill="none" stroke="#e8241c" stroke-width="0.7"/></svg>
<span class="t" style="top:93.00px;font-size:9.5px;line-height:13px;color:#8a8a8a;left:632.20px;font-style:italic;transform:scaleX(0.8156);transform-origin:0 50%;-webkit-text-stroke:0.2px;">BIS Employee Termination Form - Matt Harrison.pdf</span>
<svg style="left:580.9px;top:119.5px;" width="32.2" height="42" viewBox="0 0 32.2 42"><path d="M6 1.5 h13.4 l11.3 11.3 v23.2 a4.5 4.5 0 0 1 -4.5 4.5 h-20.2 a4.5 4.5 0 0 1 -4.5 -4.5 v-30 a4.5 4.5 0 0 1 4.5 -4.5z" fill="none" stroke="#ffffff" stroke-width="3"/><path d="M19.6 2.2 l10.4 10.4 h-7.4 a3 3 0 0 1 -3 -3z" fill="#dcdcdc"/><path d="M9.4 19.6 h13.4 M9.4 24.9 h13.4 M9.4 30.2 h5.6" stroke="#ffffff" stroke-width="2.4" stroke-linecap="round"/></svg>
<svg style="left:562.8px;top:137.3px;" width="7" height="5.8" viewBox="0 0 7 5.8"><path d="M0 0 h7 l-3.5 5.8z" fill="#8c8c8c"/></svg>
<span class="t" style="top:129.00px;font-size:10px;line-height:13px;color:#c8c8c8;left:620.40px;transform:scaleX(0.9376);transform-origin:0 50%;-webkit-text-stroke:0.2px;">Document (6)</span>
<svg style="left:620.6px;top:143.20000000000002px;" width="9.6" height="9.4" viewBox="0 0 9.6 9.4"><path d="M1.6 0.4 h5.2 l2.4 2.4 v6.2 h-7.6z" fill="#f4f4f4" stroke="#bbb" stroke-width="0.4"/><rect x="0" y="0.6" width="3.6" height="1.8" fill="#e8241c"/><path d="M3.6 7.6 c1.6 -1.6 2.2 -3.4 1.8 -4.4 c-0.6 -0.8 -1 1 0 2.4 c0.8 1.2 2.2 1.8 2.8 1.4 c0.4 -0.6 -2.4 -0.6 -4.6 0.6z" fill="none" stroke="#e8241c" stroke-width="0.7"/></svg>
<span class="t" style="top:141.00px;font-size:9.5px;line-height:13px;color:#8a8a8a;left:632.20px;font-style:italic;transform:scaleX(0.8120);transform-origin:0 50%;-webkit-text-stroke:0.2px;">AWC Transcript.pdf</span>
<div class="a" style="left:614.2px;top:165.2px;width:365.4px;height:47.8px;background:#262626;border:1px solid #5c5c5c;border-radius:3px"></div>
<div class="a" style="left:621.7px;top:168.3px;width:32.8px;height:41.8px;background:#ebe2e3;border:1px solid #e3a3aa;overflow:hidden"><div class="a" style="left:3px;top:2.5px;width:6px;height:2px;background:#c8aeb0"></div><div class="a" style="left:3px;top:6px;width:5px;height:2.4px;background:#5c4a4c"></div><div class="a" style="left:14px;top:2.5px;width:6px;height:1.6px;background:#d2c0c2"></div><div class="a" style="left:17px;top:6px;width:4px;height:1.4px;background:#bfa9ab"></div><div class="a" style="left:2.5px;top:10px;width:26px;height:26px;background:repeating-linear-gradient(180deg,#ddd0d2 0 1px,#ece4e5 1px 2.6px)"></div><div class="a" style="left:10.5px;top:15px;width:11px;height:11px;border-radius:6px;background:#f4efef"></div><div class="a" style="left:3px;top:37.4px;width:25px;height:1.4px;background:#cdb9bb"></div></div>
<span class="t" style="top:182.00px;font-size:10px;line-height:13px;color:#ffffff;left:661.90px;font-weight:700;transform:scaleX(0.8496);transform-origin:0 50%;">Page 1</span>
<div class="a" style="left:621.7px;top:217.3px;width:32.8px;height:41.8px;background:#ebe2e3;border:1px solid #e3a3aa;overflow:hidden"><div class="a" style="left:3px;top:2.5px;width:6px;height:2px;background:#c8aeb0"></div><div class="a" style="left:3px;top:6px;width:5px;height:2.4px;background:#5c4a4c"></div><div class="a" style="left:14px;top:2.5px;width:6px;height:1.6px;background:#d2c0c2"></div><div class="a" style="left:17px;top:6px;width:4px;height:1.4px;background:#bfa9ab"></div><div class="a" style="left:2.5px;top:10px;width:26px;height:26px;background:repeating-linear-gradient(180deg,#ddd0d2 0 1px,#ece4e5 1px 2.6px)"></div><div class="a" style="left:10.5px;top:15px;width:11px;height:11px;border-radius:6px;background:#f4efef"></div><div class="a" style="left:3px;top:37.4px;width:25px;height:1.4px;background:#cdb9bb"></div></div>
<span class="t" style="top:231.00px;font-size:10px;line-height:13px;color:#9c9c9c;left:661.90px;transform:scaleX(0.8706);transform-origin:0 50%;-webkit-text-stroke:0.2px;">Page 2</span>
<div class="a" style="left:984.4px;top:183.4px;width:4.8px;height:55.4px;background:#154d52;border-radius:2.4px"></div>
<div class="a" style="left:519px;top:58px;width:470.6px;height:26.6px;background:#212121;border-bottom:1px solid #2d2d2d"></div>
<span class="t" style="top:65.00px;font-size:9.5px;line-height:13px;color:#9a9a9a;left:529.60px;transform:scaleX(0.8790);transform-origin:0 50%;-webkit-text-stroke:0.2px;">TEST BATCH</span>
<svg style="left:964.6px;top:64.6px;" width="13.6" height="12.6" viewBox="0 0 13.6 12.6"><path d="M0 0.4 h4.6 v4.4 h-4.6z M8.4 0.4 h5.2 v4.4 h-5.2z M8.4 7.6 h5.2 v4.6 h-5.2z" fill="#c4c4c4"/><path d="M4.6 2.6 h3.8 M6.4 2.6 v7.4 h2" stroke="#c4c4c4" stroke-width="1.2" fill="none"/></svg>
<div class="a" style="left:519px;top:256px;width:470.6px;height:2.8px;background:#151515;"></div>
<div class="a" style="left:519px;top:258.8px;width:470.6px;height:293.7px;background:#1b1b1b;"></div>
<div class="a" style="left:519px;top:258.8px;width:470.6px;height:26px;background:#212121;border-bottom:1px solid #2d2d2d"></div>
<span class="t" style="top:266.00px;font-size:9.5px;line-height:13px;color:#9a9a9a;left:529.60px;transform:scaleX(0.8988);transform-origin:0 50%;-webkit-text-stroke:0.2px;">DIAGNOSTICS:</span>
<span class="t" style="top:266.00px;font-size:9.6px;line-height:13px;color:#2ab3c4;left:598.20px;transform:scaleX(0.9938);transform-origin:0 50%;-webkit-text-stroke:0.2px;">Conditional Binarize</span>
<svg style="left:965.8px;top:267px;" width="12" height="12" viewBox="0 0 12 12"><path d="M6.4 0.8 h-4.4 a1.3 1.3 0 0 0 -1.3 1.3 v8 a1.3 1.3 0 0 0 1.3 1.3 h8 a1.3 1.3 0 0 0 1.3 -1.3 v-4.4" stroke="#c4c4c4" stroke-width="1.3" fill="none"/><path d="M4.6 7.4 L11 1 M7.4 0.8 h3.8 v3.8" stroke="#c4c4c4" stroke-width="1.3" fill="none"/></svg>
<div class="a" style="left:521.2px;top:354.4px;width:115px;height:53px;border:1.8px solid #d8d02a"></div>
<svg style="left:537.1px;top:293.4px;" width="8.6" height="10" viewBox="0 0 8.6 10"><path d="M0.4 0.3 h5.4 l2.4 2.4 v7 h-7.8z" fill="#f1f1f1" stroke="#b5b5b5" stroke-width="0.4"/><path d="M1.8 3.6 h4.6 M1.8 5.2 h4.6 M1.8 6.8 h4.6 M1.8 8.2 h3" stroke="#c9c9c9" stroke-width="0.5"/></svg>
<span class="t" style="top:291.00px;font-size:9.6px;line-height:13px;color:#bcbcbc;left:550.10px;transform:scaleX(0.9849);transform-origin:0 50%;-webkit-text-stroke:0.25px;">Execution Log.txt</span>
<svg style="left:536.5px;top:307.41999999999996px;" width="9.4" height="7.2" viewBox="0 0 9.4 7.2"><rect x="0.3" y="0.3" width="8.8" height="6.6" fill="#f6f6f6" stroke="#c4c4c4" stroke-width="0.5"/><path d="M1.6 5.8 c0.2 -2.6 1.6 -4 3.2 -4 c1.8 0 2.8 1.4 3 4z" fill="#f09a2e"/><path d="M2.6 5.8 c0.4 -1.6 1.2 -2.4 2.2 -2.4 c1 0 1.8 0.8 2 2.4z" fill="#e0402a"/><path d="M1.4 2.6 l1.4 -1 l0.6 1z" fill="#5da84a"/></svg>
<span class="t" style="top:304.00px;font-size:9.6px;line-height:13px;color:#bcbcbc;left:550.10px;-webkit-text-stroke:0.25px;">Input Image.jpg</span>
<svg style="left:535.4px;top:319.03999999999996px;" width="11" height="9.2" viewBox="0 0 11 9.2"><path d="M0.4 1 a0.6 0.6 0 0 1 0.6 -0.6 h3 l1 1.1 h4.2 a0.6 0.6 0 0 1 0.6 0.6 v6.4 h-9.4z" fill="#c8962a"/><path d="M2.4 3.6 h8.4 l-1.5 5.2 h-8.6z" fill="#ffd56e"/><path d="M2 2 h6.6 v1.6 h-6.6z" fill="#fff6d6"/><path d="M0.7 8.8 l1.7 -5.2 h8.4" fill="none" stroke="#fff3c4" stroke-width="0.5"/></svg>
<svg style="left:526.8px;top:321.24px;" width="5.6" height="4.8" viewBox="0 0 5.6 4.8"><path d="M0 0 h5.6 l-2.8 4.8z" fill="#5e5e5e"/></svg>
<span class="t" style="top:316.00px;font-size:9.6px;line-height:13px;color:#e6e6e6;left:550.10px;font-weight:700;transform:scaleX(0.9628);transform-origin:0 50%;">Classify Image</span>
<svg style="left:548.9px;top:331.26px;" width="8.6" height="10" viewBox="0 0 8.6 10"><path d="M0.4 0.3 h5.4 l2.4 2.4 v7 h-7.8z" fill="#f1f1f1" stroke="#b5b5b5" stroke-width="0.4"/><path d="M1.8 3.6 h4.6 M1.8 5.2 h4.6 M1.8 6.8 h4.6 M1.8 8.2 h3" stroke="#c9c9c9" stroke-width="0.5"/></svg>
<span class="t" style="top:329.00px;font-size:9.6px;line-height:13px;color:#bcbcbc;left:561.90px;transform:scaleX(0.9849);transform-origin:0 50%;-webkit-text-stroke:0.25px;">Execution Log.txt</span>
<svg style="left:548.3px;top:345.28px;" width="9.4" height="7.2" viewBox="0 0 9.4 7.2"><rect x="0.3" y="0.3" width="8.8" height="6.6" fill="#f6f6f6" stroke="#c4c4c4" stroke-width="0.5"/><path d="M1.6 5.8 c0.2 -2.6 1.6 -4 3.2 -4 c1.8 0 2.8 1.4 3 4z" fill="#f09a2e"/><path d="M2.6 5.8 c0.4 -1.6 1.2 -2.4 2.2 -2.4 c1 0 1.8 0.8 2 2.4z" fill="#e0402a"/><path d="M1.4 2.6 l1.4 -1 l0.6 1z" fill="#5da84a"/></svg>
<span class="t" style="top:342.00px;font-size:9.6px;line-height:13px;color:#bcbcbc;left:561.90px;-webkit-text-stroke:0.25px;">Input Image.jpg</span>
<svg style="left:535.4px;top:356.9px;" width="11" height="9.2" viewBox="0 0 11 9.2"><path d="M0.4 1 a0.6 0.6 0 0 1 0.6 -0.6 h3 l1 1.1 h4.2 a0.6 0.6 0 0 1 0.6 0.6 v6.4 h-9.4z" fill="#c8962a"/><path d="M2.4 3.6 h8.4 l-1.5 5.2 h-8.6z" fill="#ffd56e"/><path d="M2 2 h6.6 v1.6 h-6.6z" fill="#fff6d6"/><path d="M0.7 8.8 l1.7 -5.2 h8.4" fill="none" stroke="#fff3c4" stroke-width="0.5"/></svg>
<svg style="left:526.8px;top:359.1px;" width="5.6" height="4.8" viewBox="0 0 5.6 4.8"><path d="M0 0 h5.6 l-2.8 4.8z" fill="#5e5e5e"/></svg>
<span class="t" style="top:354.00px;font-size:9.6px;line-height:13px;color:#e6e6e6;left:550.10px;font-weight:700;transform:scaleX(0.9912);transform-origin:0 50%;">Threshold (Auto)</span>
<svg style="left:548.9px;top:369.12px;" width="8.6" height="10" viewBox="0 0 8.6 10"><path d="M0.4 0.3 h5.4 l2.4 2.4 v7 h-7.8z" fill="#f1f1f1" stroke="#b5b5b5" stroke-width="0.4"/><path d="M1.8 3.6 h4.6 M1.8 5.2 h4.6 M1.8 6.8 h4.6 M1.8 8.2 h3" stroke="#c9c9c9" stroke-width="0.5"/></svg>
<span class="t" style="top:367.00px;font-size:9.6px;line-height:13px;color:#bcbcbc;left:561.90px;transform:scaleX(0.9849);transform-origin:0 50%;-webkit-text-stroke:0.25px;">Execution Log.txt</span>
<svg style="left:548.3px;top:383.13999999999993px;" width="9.4" height="7.2" viewBox="0 0 9.4 7.2"><rect x="0.3" y="0.3" width="8.8" height="6.6" fill="#f6f6f6" stroke="#c4c4c4" stroke-width="0.5"/><path d="M1.6 5.8 c0.2 -2.6 1.6 -4 3.2 -4 c1.8 0 2.8 1.4 3 4z" fill="#f09a2e"/><path d="M2.6 5.8 c0.4 -1.6 1.2 -2.4 2.2 -2.4 c1 0 1.8 0.8 2 2.4z" fill="#e0402a"/><path d="M1.4 2.6 l1.4 -1 l0.6 1z" fill="#5da84a"/></svg>
<span class="t" style="top:379.00px;font-size:9.6px;line-height:13px;color:#bcbcbc;left:561.90px;-webkit-text-stroke:0.25px;">Input Image.jpg</span>
<div class="a" style="left:545.2px;top:392.75999999999993px;width:87.6px;height:13px;background:#1b1b1b;border:1px solid #2a747c;border-radius:3px"></div>
<svg style="left:548.3px;top:395.75999999999993px;" width="9.4" height="7.2" viewBox="0 0 9.4 7.2"><rect x="0.3" y="0.3" width="8.8" height="6.6" fill="#f6f6f6" stroke="#c4c4c4" stroke-width="0.5"/><path d="M1.6 5.8 c0.2 -2.6 1.6 -4 3.2 -4 c1.8 0 2.8 1.4 3 4z" fill="#f09a2e"/><path d="M2.6 5.8 c0.4 -1.6 1.2 -2.4 2.2 -2.4 c1 0 1.8 0.8 2 2.4z" fill="#e0402a"/><path d="M1.4 2.6 l1.4 -1 l0.6 1z" fill="#5da84a"/></svg>
<span class="t" style="top:392.00px;font-size:9.6px;line-height:13px;color:#ffffff;left:561.90px;font-weight:700;transform:scaleX(0.9790);transform-origin:0 50%;">Output Image.tif</span>
<svg style="left:536.5px;top:408.37999999999994px;" width="9.4" height="7.2" viewBox="0 0 9.4 7.2"><rect x="0.3" y="0.3" width="8.8" height="6.6" fill="#f6f6f6" stroke="#c4c4c4" stroke-width="0.5"/><path d="M1.6 5.8 c0.2 -2.6 1.6 -4 3.2 -4 c1.8 0 2.8 1.4 3 4z" fill="#f09a2e"/><path d="M2.6 5.8 c0.4 -1.6 1.2 -2.4 2.2 -2.4 c1 0 1.8 0.8 2 2.4z" fill="#e0402a"/><path d="M1.4 2.6 l1.4 -1 l0.6 1z" fill="#5da84a"/></svg>
<span class="t" style="top:405.00px;font-size:9.6px;line-height:13px;color:#bcbcbc;left:550.10px;transform:scaleX(1.0327);transform-origin:0 50%;-webkit-text-stroke:0.25px;">Output Image.tif</span>
<div class="a" style="left:519px;top:547px;width:117px;height:5.4px;background:#154d52;border-radius:2.7px"></div>
<div class="a" style="left:637.4px;top:285.8px;width:352.2px;height:266.7px;background:#222222;background-image:linear-gradient(#1e1e1e 1px,transparent 1px),linear-gradient(90deg,#1e1e1e 1px,transparent 1px);background-size:2px 2px;"></div>
<div class="a" style="left:637.4px;top:285.8px;width:2px;height:266.7px;background:#171717;"></div>
<svg style="left:651.4px;top:295px;" width="14" height="10.6" viewBox="0 0 14 10.6"><path d="M0.6 0 v10.6 M13.4 0 v10.6" stroke="#c2c2c2" stroke-width="1.2"/><path d="M2.6 5.3 h8.8 M4.6 3.2 L2.6 5.3 L4.6 7.4 M9.4 3.2 L11.4 5.3 L9.4 7.4" stroke="#c2c2c2" stroke-width="1.1" fill="none"/></svg>
<svg style="left:671px;top:294px;" width="12.4" height="12.4" viewBox="0 0 12.4 12.4"><rect x="0.7" y="0.7" width="11" height="11" fill="none" stroke="#c2c2c2" stroke-width="1.3" stroke-dasharray="1.4 1.2"/><rect x="3.8" y="3.8" width="4.8" height="4.8" fill="none" stroke="#c2c2c2" stroke-width="1.3"/></svg>
<svg style="left:689.6px;top:293.6px;" width="12" height="13.4" viewBox="0 0 12 13.4"><rect x="3" y="0" width="9" height="10.6" rx="1.2" fill="#c2c2c2"/><path d="M0.8 2.6 v8.6 a1.4 1.4 0 0 0 1.4 1.4 h7" stroke="#c2c2c2" stroke-width="1.3" fill="none"/></svg>
<svg style="left:759px;top:296px;" width="9" height="8" viewBox="0 0 9 8"><path d="M0.7 0 v8" stroke="#767676" stroke-width="1.4"/><path d="M8.6 0 v8 l-6 -4z" fill="#767676"/></svg>
<svg style="left:780.4px;top:296px;" width="5" height="8" viewBox="0 0 5 8"><path d="M4.4 0.4 L1 4 L4.4 7.6" stroke="#767676" stroke-width="1.3" fill="none"/></svg>
<div class="a" style="left:801.2px;top:291.6px;width:17.4px;height:16px;background:#202020;border:1px solid #3c3c3c;border-radius:3px"></div>
<span class="t" style="top:293.00px;font-size:10.5px;line-height:14px;color:#e0e0e0;left:807.40px;font-weight:700;transform:scaleX(0.8214);transform-origin:0 50%;">1</span>
<span class="t" style="top:293.00px;font-size:10.5px;line-height:14px;color:#c0c0c0;left:820.80px;font-weight:700;transform:scaleX(1.1408);transform-origin:0 50%;">/1</span>
<svg style="left:844.6px;top:296px;" width="5" height="8" viewBox="0 0 5 8"><path d="M0.6 0.4 L4 4 L0.6 7.6" stroke="#767676" stroke-width="1.3" fill="none"/></svg>
<svg style="left:862px;top:296px;" width="9" height="8" viewBox="0 0 9 8"><path d="M8.3 0 v8" stroke="#767676" stroke-width="1.4"/><path d="M0.4 0 v8 l6 -4z" fill="#767676"/></svg>
<svg style="left:964.6px;top:294px;" width="13.6" height="12.4" viewBox="0 0 13.6 12.4"><path d="M3 0 h7.6 v2.6 h-7.6z M1.6 3.6 h10.4 a1.6 1.6 0 0 1 1.6 1.6 v4.6 h-2.6 v2.6 h-8.4 v-2.6 h-2.6 v-4.6 a1.6 1.6 0 0 1 1.6 -1.6z M4 8.2 v2.8 h5.6 v-2.8z" fill="#c2c2c2" fill-rule="evenodd"/></svg>
<div class="a" style="left:638.8px;top:311.2px;width:351.6px;height:245.4px;background:#000000;border:2px solid #e6df1c"></div>
<div class="a" style="left:641.2px;top:313.4px;width:1px;height:222px;background:#6f6f8c;"></div>
<div class="a" style="left:649px;top:314.6px;width:334.3px;height:1px;background:linear-gradient(90deg,#3a3a3a,#6a6a6a 40%,#e8e8e8 85%)"></div>
<div class="a" style="left:982.3px;top:314.6px;width:1px;height:238px;background:#e8e8e8;"></div>
<div class="a" style="left:983.6px;top:316px;width:4.6px;height:238.6px;background:#10262b;"></div>
<div class="a" style="left:649px;top:322.4px;width:649.6px;height:460.2px;background:#ffffff;transform:scale(0.5);transform-origin:0 0;overflow:hidden">
<svg style="left:0;top:0" width="652" height="120" viewBox="0 0 652 120"><path d="M67.4 73.5 L35.4 74.6 L35.4 75.8 L67.4 76.9Z M64.1 69.4 L47.1 67.1 L46.9 68.3 L63.4 72.7Z M69.2 66.5 L38.4 56.3 L38.0 57.4 L68.0 69.7Z M67.5 61.7 L51.7 53.0 L51.1 54.0 L65.7 64.5Z M73.3 60.4 L46.7 39.9 L45.9 40.8 L71.1 63.0Z M73.2 55.3 L60.3 41.0 L59.4 41.7 L70.6 57.4Z M79.1 55.7 L59.4 26.9 L58.4 27.6 L76.3 57.5Z M80.8 50.8 L72.1 32.3 L71.0 32.8 L77.7 52.1Z M86.3 52.9 L75.4 18.7 L74.2 19.0 L83.0 53.8Z M89.5 48.6 L85.8 27.9 L84.6 28.0 L86.2 49.1Z M94.1 52.2 L93.0 15.9 L91.8 15.9 L90.7 52.2Z M98.6 49.1 L100.2 28.0 L99.0 27.9 L95.3 48.6Z M101.8 53.8 L110.6 19.0 L109.4 18.7 L98.5 52.9Z M107.1 52.1 L113.8 32.8 L112.7 32.3 L104.0 50.8Z M108.5 57.5 L126.4 27.6 L125.4 26.9 L105.7 55.7Z M114.2 57.4 L125.4 41.7 L124.5 41.0 L111.6 55.3Z M113.7 63.0 L138.9 40.8 L138.1 39.9 L111.5 60.4Z M119.1 64.5 L133.7 54.0 L133.1 53.0 L117.3 61.7Z M116.8 69.7 L146.8 57.4 L146.4 56.3 L115.6 66.5Z M121.4 72.7 L137.9 68.3 L137.7 67.1 L120.7 69.4Z M117.4 76.9 L149.4 75.8 L149.4 74.6 L117.4 73.5Z" fill="#0a0a0a" stroke="#0a0a0a" stroke-width="0.6"/><path d="M70.40000000000009 75.20000000000005 a22 20 0 0 1 44 0" fill="none" stroke="#0a0a0a" stroke-width="1.6"/><path d="M77.40000000000009 75.80000000000004 l11 -18 l4 6 l-7 12z M87.40000000000009 75.80000000000004 l7 -12 l-2 -4 l3 -4 l14 20 h-8 l-6 -10 l-5 10z" fill="#0a0a0a"/></svg>
<span class="t" style="top:79.00px;font-size:7.8px;line-height:11px;color:#111;left:32.00px;font-weight:700;font-family:Liberation Sans,sans-serif;transform:scaleX(1.0496);transform-origin:0 50%;">ARIZONA WESTERN COLLEGE</span>
<span class="t" style="top:39.00px;font-size:12.8px;line-height:16px;color:#111;left:269.20px;font-weight:700;font-family:Liberation Serif,serif;transform:scaleX(1.0334);transform-origin:0 50%;">Enrollment Services</span>
<span class="t" style="top:54.00px;font-size:12.4px;line-height:16px;color:#111;left:296.00px;font-weight:700;font-family:Liberation Serif,serif;transform:scaleX(0.8862);transform-origin:0 50%;">P.O. Box 929</span>
<span class="t" style="top:69.00px;font-size:12.4px;line-height:16px;color:#111;left:274.00px;font-weight:700;font-family:Liberation Serif,serif;transform:scaleX(0.8945);transform-origin:0 50%;">Yuma, AZ 85366-0929</span>
<span class="t" style="top:42.00px;font-size:12.4px;line-height:16px;color:#111;left:541.40px;font-weight:700;font-family:Liberation Serif,serif;transform:scaleX(0.8878);transform-origin:0 50%;">Ph: (928) 317-6100</span>
<span class="t" style="top:57.00px;font-size:12.4px;line-height:16px;color:#111;left:560.80px;font-weight:700;font-family:Liberation Serif,serif;transform:scaleX(0.8833);transform-origin:0 50%;">(888) 293-0392</span>
<span class="t" style="top:70.00px;font-size:12.4px;line-height:16px;color:#111;left:535.60px;font-weight:700;font-family:Liberation Serif,serif;transform:scaleX(0.8946);transform-origin:0 50%;">Fax: (928) 344-7543</span>
<div class="a" style="left:0;top:104.0px;width:652.4px;height:1.6px;background:#444"></div>
<span class="t" style="top:110.00px;font-size:8.58px;line-height:12px;color:#333;left:552.00px;font-family:Liberation Mono,monospace;letter-spacing:-0.468px;">Page:   1 of   1</span>
<span class="t" style="top:123.00px;font-size:8.58px;line-height:12px;color:#555;left:10.80px;font-family:Liberation Mono,monospace;letter-spacing:-0.468px;">Name:</span>
<div class="a" style="left:39.59999999999991px;top:123.0px;width:91.20000000000005px;height:12.4px;background:#050505;border-radius:6.2px 4.34px 6.2px 3.7199999999999998px;transform:rotate(0.5deg)"></div>
<span class="t" style="top:136.00px;font-size:8.58px;line-height:12px;color:#666;left:17.20px;font-family:Liberation Mono,monospace;letter-spacing:-0.468px;">ID#</span>
<div class="a" style="left:41.200000000000045px;top:137.80000000000007px;width:44.0px;height:8.8px;background:#050505;border-radius:4.4px 3.08px 4.4px 2.64px;transform:rotate(1.5deg)"></div>
<span class="t" style="top:123.00px;font-size:8.58px;line-height:12px;color:#333;left:325.40px;font-family:Liberation Mono,monospace;letter-spacing:-0.468px;">Birthdate:</span>
<div class="a" style="left:384.5999999999999px;top:124.80000000000007px;width:63.80000000000018px;height:8.8px;background:#050505;border-radius:4.4px 3.08px 4.4px 2.64px;transform:rotate(1.2deg)"></div>
<span class="t" style="top:123.00px;font-size:8.58px;line-height:12px;color:#333;left:523.40px;font-family:Liberation Mono,monospace;letter-spacing:-0.468px;">Prepared: 11/11/10</span>
<div class="a" style="left:78px;top:161.20000000000005px;width:93.20000000000005px;height:9.2px;background:#050505;border-radius:4.6px 3.2199999999999998px 4.6px 2.76px;transform:rotate(0.8deg)"></div>
<div class="a" style="left:74px;top:172.20000000000005px;width:74.40000000000009px;height:9.2px;background:#050505;border-radius:4.6px 3.2199999999999998px 4.6px 2.76px;transform:rotate(-0.4deg)"></div>
<div class="a" style="left:78px;top:186.0000000000001px;width:76px;height:9.6px;background:#050505;border-radius:4.8px 3.36px 4.8px 2.88px;transform:rotate(0.3deg)"></div>
<span class="t" style="top:149.00px;font-size:8.91px;line-height:12px;color:#444;left:317.00px;font-family:Liberation Mono,monospace;letter-spacing:-0.486px;">****************************************************************</span>
<span class="t" style="top:161.00px;font-size:8.91px;line-height:12px;color:#2a2a2a;left:317.00px;font-family:Liberation Mono,monospace;letter-spacing:-0.486px;">* Active Degree: CERT.ADBUS , ADBU-A                           *</span>
<span class="t" style="top:173.00px;font-size:8.91px;line-height:12px;color:#2a2a2a;left:317.00px;font-family:Liberation Mono,monospace;letter-spacing:-0.486px;">* Degree: AA.GENST , General Studies , 05/14/10                *</span>
<span class="t" style="top:185.00px;font-size:8.91px;line-height:12px;color:#2a2a2a;left:317.00px;font-family:Liberation Mono,monospace;letter-spacing:-0.486px;">* Degree: CERT.ADBUS , ADBU A , 05/14/10                       *</span>
<span class="t" style="top:198.00px;font-size:8.91px;line-height:12px;color:#444;left:317.00px;font-family:Liberation Mono,monospace;letter-spacing:-0.486px;">****************************************************************</span>
<span class="t" style="top:259.00px;font-size:8.91px;line-height:12px;color:#999;left:6.80px;font-family:Liberation Mono,monospace;letter-spacing:-0.486px;">--------------------------<b style="color:#1c1c1c"> FALL 1994 </b>------------------------</span>
<span class="t" style="top:272.00px;font-size:8.91px;line-height:12px;color:#333;left:6.80px;font-weight:700;font-family:Liberation Mono,monospace;letter-spacing:-0.486px;">TRANSFER CREDITS</span>
<span class="t" style="top:284.00px;font-size:8.91px;line-height:12px;color:#777;left:6.80px;font-family:Liberation Mono,monospace;letter-spacing:-0.486px;">Rio Salado College:  01/01/94 - 05/11/94</span>
<span class="t" style="top:296.00px;font-size:8.91px;line-height:12px;color:#2e2e2e;left:6.80px;font-weight:700;font-family:Liberation Mono,monospace;letter-spacing:-0.486px;">BUA 100E     BUSINESS ADMINISTRATION            2.00</span>
<span class="t" style="top:308.00px;font-size:8.91px;line-height:12px;color:#2e2e2e;left:6.80px;font-weight:700;font-family:Liberation Mono,monospace;letter-spacing:-0.486px;">BUA 100E     BUSINESS ADMINISTRATION            3.00</span>
<span class="t" style="top:333.00px;font-size:8.91px;line-height:12px;color:#2e2e2e;left:6.80px;font-weight:700;font-family:Liberation Mono,monospace;letter-spacing:-0.486px;">CIS 116-021  KEYBOARDING/MS/WP          A       4.00   16.00</span>
<span class="t" style="top:345.00px;font-size:8.91px;line-height:12px;color:#2e2e2e;left:6.80px;font-weight:700;font-family:Liberation Mono,monospace;letter-spacing:-0.486px;">ENG 096 004  BASIC WRITING 1            A       3.00   12.00</span>
<span class="t" style="top:358.00px;font-size:8.91px;line-height:12px;color:#333;left:6.80px;font-weight:700;font-family:Liberation Mono,monospace;letter-spacing:-0.486px;">MAT 122-014  ALGEBRA: INT  ACCELERATED  C       3.00    6.00</span>
<span class="t" style="top:370.00px;font-size:8.91px;line-height:12px;color:#333;left:6.80px;font-weight:700;font-family:Liberation Mono,monospace;letter-spacing:-0.486px;">HIS 122 003  HISTORY OF U.S. FROM 1865  W      <3.00</span>
<span class="t" style="top:382.00px;font-size:8.91px;line-height:12px;color:#aaa;left:6.80px;font-family:Liberation Mono,monospace;letter-spacing:-0.486px;">-------------------------------------------------------------</span>
<span class="t" style="top:395.00px;font-size:8.91px;line-height:12px;color:#333;left:6.80px;font-weight:700;font-family:Liberation Mono,monospace;letter-spacing:-0.486px;">                  AHRS      EHRS      QHRS      QPTS      GPA</span>
<span class="t" style="top:407.00px;font-size:8.91px;line-height:12px;color:#777;left:6.80px;font-family:Liberation Mono,monospace;letter-spacing:-0.486px;">     Current     13.00     10.00     10.00     34.00     3.400</span>
<span class="t" style="top:419.00px;font-size:8.91px;line-height:12px;color:#666;left:6.80px;font-family:Liberation Mono,monospace;letter-spacing:-0.486px;">  Cumulative     13.00     10.00     10.00     34.00     3.400</span>
<span class="t" style="top:444.00px;font-size:8.91px;line-height:12px;color:#999;left:6.80px;font-family:Liberation Mono,monospace;letter-spacing:-0.486px;">--------------------------<b style="color:#1c1c1c">SPRING 2005</b>------------------------</span>
<span class="t" style="top:457.00px;font-size:8.91px;line-height:12px;color:#2e2e2e;left:6.80px;font-weight:700;font-family:Liberation Mono,monospace;letter-spacing:-0.486px;">ENG 101 021  FRESHMAN COMPOSITION       C       3.00    6.00</span>
<span class="t" style="top:259.00px;font-size:8.91px;line-height:12px;color:#999;left:316.40px;font-family:Liberation Mono,monospace;letter-spacing:-0.486px;">-------------------------------------------------------------</span>
<span class="t" style="top:272.00px;font-size:8.91px;line-height:12px;color:#333;left:318.80px;font-weight:700;font-family:Liberation Mono,monospace;letter-spacing:-0.486px;">                 AHRS      EHRS      QHRS      QPTS      GPA</span>
<span class="t" style="top:284.00px;font-size:8.91px;line-height:12px;color:#666;left:318.80px;font-family:Liberation Mono,monospace;letter-spacing:-0.486px;">    Current     13.00     13.00     13.00     39.00     3.000</span>
<span class="t" style="top:296.00px;font-size:8.91px;line-height:12px;color:#666;left:318.80px;font-family:Liberation Mono,monospace;letter-spacing:-0.486px;"> Cumulative     45.00     45.00     45.00    116.00     2.900</span>
<span class="t" style="top:321.00px;font-size:8.91px;line-height:12px;color:#888;left:316.40px;font-family:Liberation Mono,monospace;letter-spacing:-0.486px;">--------------------------<b style="color:#1c1c1c">SPRING 2007</b>------------------------</span>
<span class="t" style="top:333.00px;font-size:8.91px;line-height:12px;color:#3a3a3a;left:316.40px;font-family:Liberation Mono,monospace;letter-spacing:-0.486px;">CIS-120-009  INTRO TO COMP INFO SYST/O  A       3.00  12.00</span>
<span class="t" style="top:345.00px;font-size:8.91px;line-height:12px;color:#3a3a3a;left:316.40px;font-family:Liberation Mono,monospace;letter-spacing:-0.486px;">POS-120-002  AMERICAN POLITICS/ON       B       3.00   9.00</span>
<span class="t" style="top:358.00px;font-size:8.91px;line-height:12px;color:#3a3a3a;left:316.40px;font-family:Liberation Mono,monospace;letter-spacing:-0.486px;">PSY-101-501  PSYCHOLOGY: INTRODUCTION/  C       3.00   6.00</span>
<span class="t" style="top:370.00px;font-size:8.91px;line-height:12px;color:#333;left:316.40px;font-weight:700;font-family:Liberation Mono,monospace;letter-spacing:-0.486px;">MAT 187 004  PRECALCULUS                C       5.00  10.00</span>
<span class="t" style="top:382.00px;font-size:8.91px;line-height:12px;color:#2e2e2e;left:316.40px;font-weight:700;font-family:Liberation Mono,monospace;letter-spacing:-0.486px;">CIS-165 121  COOPERATIVE EDUCATION      B       3.00   9.00</span>
<span class="t" style="top:395.00px;font-size:8.91px;line-height:12px;color:#aaa;left:316.40px;font-family:Liberation Mono,monospace;letter-spacing:-0.486px;">-------------------------------------------------------------</span>
<span class="t" style="top:407.00px;font-size:8.91px;line-height:12px;color:#333;left:318.80px;font-weight:700;font-family:Liberation Mono,monospace;letter-spacing:-0.486px;">                 AHRS      EHRS      QHRS      QPTS      GPA</span>
<span class="t" style="top:419.00px;font-size:8.91px;line-height:12px;color:#666;left:318.80px;font-family:Liberation Mono,monospace;letter-spacing:-0.486px;">    Current     17.00     17.00     17.00     46.00     2.706</span>
<span class="t" style="top:431.00px;font-size:8.91px;line-height:12px;color:#2e2e2e;left:318.80px;font-weight:700;font-family:Liberation Mono,monospace;letter-spacing:-0.486px;"> Cumulative     66.00     61.00     57.00    162.00     2.842</span>
<span class="t" style="top:457.00px;font-size:8.91px;line-height:12px;color:#888;left:316.40px;font-family:Liberation Mono,monospace;letter-spacing:-0.486px;">--------------------------<b style="color:#333"> FALL 2007 </b>------------------------</span>
</div>
<div class="a" style="left:0px;top:0px;width:1000px;height:563px;border:1.2px solid #4a4a4a;border-top-color:#555;border-right:1.2px solid #262626;pointer-events:none"></div>
</div></body></html>
